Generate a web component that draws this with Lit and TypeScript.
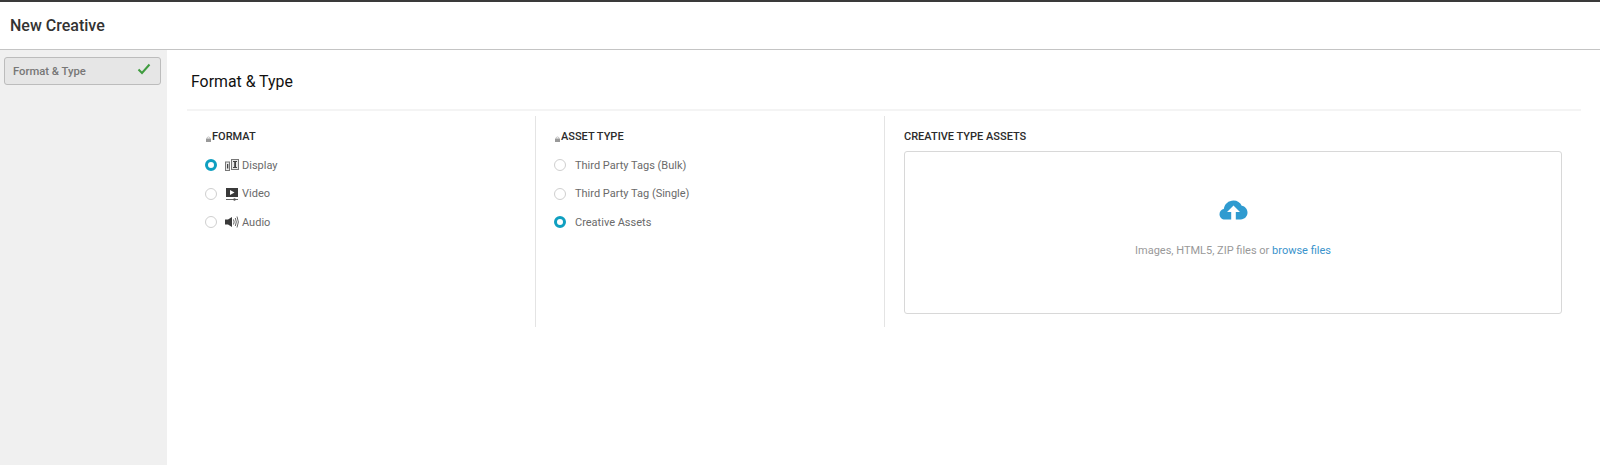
import { LitElement, html, css } from "lit";
import { customElement } from "lit/decorators.js";

const displayIcon = html`<svg class="ficon" viewBox="0 0 14 14" width="14" height="14"><path fill="#777" d="M0 3.500h5V13H0zM6 1h8v11H6z"/><path fill="#e8e8e8" d="M1 4.500h3V12H1zM7 2h6v9H7z"/><path fill="#444" d="M2 6h1.300v4.500H2zM9.200 3.500h1.800v6H9.200zM8 3h4v1H8zM8 9h4v1H8z"/></svg>`;
const videoIcon = html`<svg class="ficon" viewBox="0 0 14 14" width="14" height="14"><path fill="#3a3a3a" d="M1 1h12v9H1z"/><path fill="#fff" d="M5 3l4.500 2.500L5 8z"/><path fill="#666" d="M1 12h12v1H1z"/><circle cx="9.500" cy="12.500" r="1.200" fill="#555"/></svg>`;
const audioIcon = html`<svg class="ficon" viewBox="0 0 14 14" width="14" height="14"><path fill="#3a3a3a" d="M0 4.500h3L7 2v10L3 9.500H0z"/><path fill="none" stroke="#666" stroke-width="1" d="M8.500 4.500q1.300 2.500 0 5M10.300 3q2 4 0 8M12 1.500q2.700 5.500 0 11"/></svg>`;
const lock = html`<svg class="lock" viewBox="0 0 5 6" width="5" height="6"><path fill="#999" d="M0 2.500h5V6H0z"/><path fill="none" stroke="#aaa" stroke-width=".7" d="M1.200 2.500V1.500q1.300-1.200 2.600 0v1"/></svg>`;

@customElement("app-root")
export class AppRoot extends LitElement {
  static styles = css`
    :host {
      display: block;
      height: 465px;
      overflow: hidden;
      background: #fff;
      font-family: Roboto, "Liberation Sans", sans-serif;
      color: #333;
    }
    .page { display: flex; flex-direction: column; height: 465px; }
    .topbar {
      flex: none;
      height: 47px;
      border-top: 2px solid #3a3a3a;
      border-bottom: 1px solid #c4c4c4;
      display: flex;
      align-items: center;
      padding-left: 10px;
    }
    .topbar h1 { margin: 0; font-size: 16px; font-weight: 500; color: #333; }
    .body { flex: 1; display: flex; min-height: 0; }
    .side { flex: none; width: 167px; background: #f0f0f0; padding: 7px 6px 0 4px; box-sizing: border-box; }
    .step {
      height: 28px;
      box-sizing: border-box;
      border: 1px solid #bcbcbc;
      border-radius: 3px;
      background: #e6e6e6;
      display: flex;
      align-items: center;
      justify-content: space-between;
      padding: 0 9px 0 8px;
      font-size: 11.250px;
      font-weight: 500;
      color: #777;
    }
    .check { margin-top: -5px; }
    .main { flex: 1; padding: 0 19px 0 20px; min-width: 0; }
    .main h2 {
      margin: 0;
      height: 61px;
      box-sizing: border-box;
      padding: 23px 0 0 4px;
      font-size: 15.850px;
      line-height: 18px;
      font-weight: 400;
      color: #111;
      border-bottom: 2px solid #f4f4f4;
    }
    .cols { display: flex; margin-top: 5px; height: 211px; }
    .col { box-sizing: border-box; padding-top: 14px; }
    .c1 { width: 349px; padding-left: 19px; border-right: 1px solid #e4e4e4; }
    .c2 { width: 349px; padding-left: 19px; border-right: 1px solid #e4e4e4; }
    .c3 { flex: 1; padding-left: 19px; padding-right: 19px; }
    .label {
      font-size: 11px;
      line-height: 13px;
      font-weight: 500;
      color: #2b2b2b;
      display: flex;
      align-items: flex-end;
    }
    .lock { flex: none; margin-bottom: 1px; margin-right: 1px; }
    .opts { display: flex; flex-direction: column; margin: 8px 0 0 -1px; }
    .opt {
      height: 28.500px;
      display: flex;
      align-items: center;
      font-size: 11px;
      color: #6a6a6a;
    }
    .radio {
      flex: none;
      width: 12px;
      height: 12px;
      box-sizing: border-box;
      border: 1px solid #cfcfcf;
      border-radius: 50%;
      background: #fff;
      margin-right: 8px;
    }
    .radio.on { border: 3.500px solid #0f9fc0; }
    .c2 .radio { margin-right: 9px; }
    .ficon { flex: none; margin-right: 3px; }
    .drop {
      margin-top: 8px;
      height: 163px;
      box-sizing: border-box;
      border: 1px solid #d8d8d8;
      border-radius: 3px;
      display: flex;
      flex-direction: column;
      align-items: center;
      padding-top: 48px;
    }
    .cloud { display: block; }
    .drop p { margin: 23px 0 0; font-size: 11px; line-height: 13px; color: #999; }
    .drop a { color: #3a93cc; }
  `;

  private opt(label: string, on: boolean, icon?: unknown) {
    return html`<div class="opt"><span class="radio ${on ? "on" : ""}"></span>${icon ?? ""}<span>${label}</span></div>`;
  }

  render() {
    return html`<div class="page">
      <header class="topbar"><h1>New Creative</h1></header>
      <div class="body">
        <nav class="side">
          <div class="step">
            <span>Format &amp; Type</span>
            <svg class="check" width="14" height="12" viewBox="0 0 14 12"><path d="M1.500 6.500L5 10 12.500 1.500" fill="none" stroke="#3f9c3f" stroke-width="2"/></svg>
          </div>
        </nav>
        <main class="main">
          <h2>Format &amp; Type</h2>
          <div class="cols">
            <section class="col c1">
              <div class="label">${lock}FORMAT</div>
              <div class="opts">
                ${this.opt("Display", true, displayIcon)}
                ${this.opt("Video", false, videoIcon)}
                ${this.opt("Audio", false, audioIcon)}
              </div>
            </section>
            <section class="col c2">
              <div class="label">${lock}ASSET TYPE</div>
              <div class="opts">
                ${this.opt("Third Party Tags (Bulk)", false)}
                ${this.opt("Third Party Tag (Single)", false)}
                ${this.opt("Creative Assets", true)}
              </div>
            </section>
            <section class="col c3">
              <div class="label">CREATIVE TYPE ASSETS</div>
              <div class="drop">
                <svg class="cloud" width="29" height="21" viewBox="0 0 29 21">
                  <path fill="#2f9bd0" d="M6 19.500C2.800 19.500.5 17.200.5 14.200c0-2.800 1.900-4.800 4.300-5.200C5.500 4 9.500.5 14.500.5c3.800 0 6.800 2 8.200 5.300 3.500.6 5.800 3.500 5.800 6.800 0 3.800-3 6.900-6.700 6.900z"/>
                  <path fill="#fff" d="M14.500 5.500l6.500 6.500h-4.200v9h-4.600v-9H8z"/>
                </svg>
                <p>Images, HTML5, ZIP files or <a>browse files</a></p>
              </div>
            </section>
          </div>
        </main>
      </div>
    </div>`;
  }
}
